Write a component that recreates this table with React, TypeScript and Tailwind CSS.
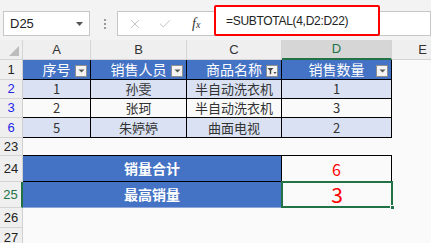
import { X, Check } from 'lucide-react';

const cjk = "font-['Noto_Sans_CJK_SC','Noto_Sans',sans-serif]";
const latin = "font-['Liberation_Sans',Arial,sans-serif]";

// little dropdown button that sits in the table header cells
const FilterButton = ({ active = false }: { active?: boolean }) => (
  <span className="absolute right-[3px] top-[5px] flex h-[12px] w-[12px] items-center justify-center border border-[#8f8f8f] bg-[#f4f4f4]">
    {active ? (
      <svg width="10" height="9" viewBox="0 0 10 9">
        <path d="M0.5 1h6l-2.3 2.6v3.2l-1.4 0.9v-4.1z" fill="#444" />
        <path d="M6.5 5h3l-1.5 2z" fill="#444" />
      </svg>
    ) : (
      <svg width="7" height="4" viewBox="0 0 7 4">
        <path d="M0.5 0.5h6l-3 3z" fill="#555" />
      </svg>
    )}
  </span>
);

const RowHead = ({ n, tone = 'normal', h }: { n: string; tone?: 'normal' | 'filtered' | 'active'; h: string }) => (
  <div
    className={`${h} ${latin} flex w-[23px] shrink-0 items-center justify-center border-b border-[#d4d4d4] bg-[#efefef] text-[13px] ${
      tone === 'filtered' ? 'border-r border-r-[#cfcfcf] text-[#2626e8]' : tone === 'active' ? 'border-r-2 border-r-[#217346] bg-[#dedede] text-[#217346]' : 'border-r border-r-[#cfcfcf] text-[#222]'
    }`}
  >
    {n}
  </div>
);

const headCell = `relative flex items-center justify-center border-r border-b border-black bg-[#4472c4] text-[14px] text-white ${cjk}`;

const DataRow = ({ n, h, band, cells }: { n: string; h: string; band: boolean; cells: string[] }) => {
  const bg = band ? 'bg-[#d9e1f2]' : 'bg-[#fafafa]';
  const cell = `flex items-center justify-center border-r border-b border-black text-[13px] text-[#333] ${bg} ${cjk}`;
  return (
    <div className={`flex ${h}`}>
      <RowHead n={n} tone="filtered" h={h} />
      <div className={`${cell} w-[68px]`}>{cells[0]}</div>
      <div className={`${cell} w-[96px]`}>{cells[1]}</div>
      <div className={`${cell} w-[95px]`}>{cells[2]}</div>
      <div className={`${cell} w-[110px]`}>{cells[3]}</div>
      <div className="flex-1 bg-[#fafafa]" />
    </div>
  );
};

export default function App() {
  return (
    <div className="h-[243px] w-[431px] overflow-hidden bg-[#f3f3f3]">
      {/* name box + formula bar */}
      <div className="relative flex h-[40px] items-start pt-[11px]">
        <div className={`${latin} ml-[3px] flex h-[25px] w-[87px] items-center justify-between border border-[#c6c6c6] bg-white pl-[6px] pr-[6px] text-[13px] text-[#222]`}>
          <span>D25</span>
          <svg width="7" height="4" viewBox="0 0 7 4">
            <path d="M0 0h7l-3.5 4z" fill="#555" />
          </svg>
        </div>
        <div className="ml-[13px] flex h-[25px] w-[3px] flex-col items-center justify-center gap-[2px]">
          <span className="h-[2px] w-[2px] bg-[#9a9a9a]" />
          <span className="h-[2px] w-[2px] bg-[#9a9a9a]" />
          <span className="h-[2px] w-[2px] bg-[#9a9a9a]" />
        </div>
        <div className="ml-[11px] flex h-[25px] flex-1 items-center border border-[#c6c6c6] bg-white">
          <X className="ml-[10px] h-[14px] w-[14px] text-[#b9b9b9]" strokeWidth={1.5} />
          <Check className="ml-[16px] h-[14px] w-[14px] text-[#b9b9b9]" strokeWidth={1.5} />
          <span className="ml-[20px] font-['Liberation_Serif',serif] text-[14px] italic text-[#333]">
            f<span className="text-[10px]">x</span>
          </span>
        </div>
        {/* highlighted formula */}
        <div className="absolute left-[214px] top-[5px] flex h-[31px] w-[166px] items-center rounded-[2px] border-2 border-[#ff0000] bg-white pl-[10px]">
          <span className={`${latin} text-[12px] tracking-[-0.3px] text-[#222]`}>=SUBTOTAL(4,D2:D22)</span>
        </div>
      </div>

      {/* column letters */}
      <div className={`flex h-[20px] ${latin} text-[13px] text-[#333]`}>
        <div className="relative w-[23px] border-r border-b border-[#d4d4d4] bg-[#efefef]">
          <svg className="absolute bottom-[3px] right-[3px]" width="10" height="10" viewBox="0 0 10 10">
            <path d="M10 0v10h-10z" fill="#bcbcbc" />
          </svg>
        </div>
        <div className="flex w-[68px] items-center justify-center border-r border-b border-[#d4d4d4] bg-[#efefef]">A</div>
        <div className="flex w-[96px] items-center justify-center border-r border-b border-[#d4d4d4] bg-[#efefef]">B</div>
        <div className="flex w-[95px] items-center justify-center border-r border-b border-[#d4d4d4] bg-[#efefef]">C</div>
        <div className="flex w-[110px] items-center justify-center border-r border-r-[#d4d4d4] border-b-2 border-b-[#217346] bg-[#d6d6d6] text-[#217346]">D</div>
        <div className="flex flex-1 items-center justify-end border-b border-[#d4d4d4] bg-[#efefef] pr-[4px]">E</div>
      </div>

      {/* table header */}
      <div className="flex h-[20px]">
        <RowHead n="1" h="h-[20px]" />
        <div className={`${headCell} w-[68px]`}>
          序号
          <FilterButton />
        </div>
        <div className={`${headCell} w-[96px]`}>
          销售人员
          <FilterButton />
        </div>
        <div className={`${headCell} w-[95px]`}>
          商品名称
          <FilterButton active />
        </div>
        <div className={`${headCell} w-[110px]`}>
          销售数量
          <FilterButton />
        </div>
        <div className="flex-1 bg-[#fafafa]" />
      </div>

      <DataRow n="2" h="h-[19px]" band cells={['1', '孙雯', '半自动洗衣机', '1']} />
      <DataRow n="3" h="h-[19px]" band={false} cells={['2', '张珂', '半自动洗衣机', '3']} />
      <DataRow n="6" h="h-[20px]" band cells={['5', '朱婷婷', '曲面电视', '2']} />

      {/* empty spacer row */}
      <div className="flex h-[18px]">
        <RowHead n="23" h="h-[18px]" />
        <div className="w-[369px] border-b border-black bg-[#fafafa]" />
        <div className="flex-1 bg-[#fafafa]" />
      </div>

      {/* summary rows */}
      <div className="flex h-[26px]">
        <RowHead n="24" h="h-[26px]" />
        <div className={`flex w-[259px] items-center justify-center border-r border-b border-black bg-[#4472c4] text-[14px] font-bold text-white ${cjk}`}>
          销量合计
        </div>
        <div className={`flex w-[110px] items-center justify-center border-r border-b border-black bg-[#fafafa] text-[16px] text-[#ff0000] ${cjk}`}>
          6
        </div>
        <div className="flex-1 bg-[#fafafa]" />
      </div>
      <div className="flex h-[26px]">
        <RowHead n="25" tone="active" h="h-[26px]" />
        <div className={`flex w-[258px] items-center justify-center border-b border-[#8fa6d6] bg-[#4472c4] text-[14px] font-bold text-white ${cjk}`}>
          最高销量
        </div>
        <div className={`relative -mt-px flex h-[27px] w-[112px] items-center justify-center border-2 border-[#217346] bg-[#fafafa] text-[21px] text-[#ff0000] ${cjk}`}>
          3
          <span className="absolute -bottom-[4px] -right-[4px] h-[5px] w-[5px] border border-white bg-[#217346]" />
        </div>
        <div className="flex-1 bg-[#fafafa]" />
      </div>

      <div className="flex h-[20px]">
        <RowHead n="26" h="h-[20px]" />
        <div className="flex-1 bg-[#fafafa]" />
      </div>
      <div className="flex h-[20px]">
        <RowHead n="27" h="h-[20px]" />
        <div className="flex-1 bg-[#fafafa]" />
      </div>
    </div>
  );
}
